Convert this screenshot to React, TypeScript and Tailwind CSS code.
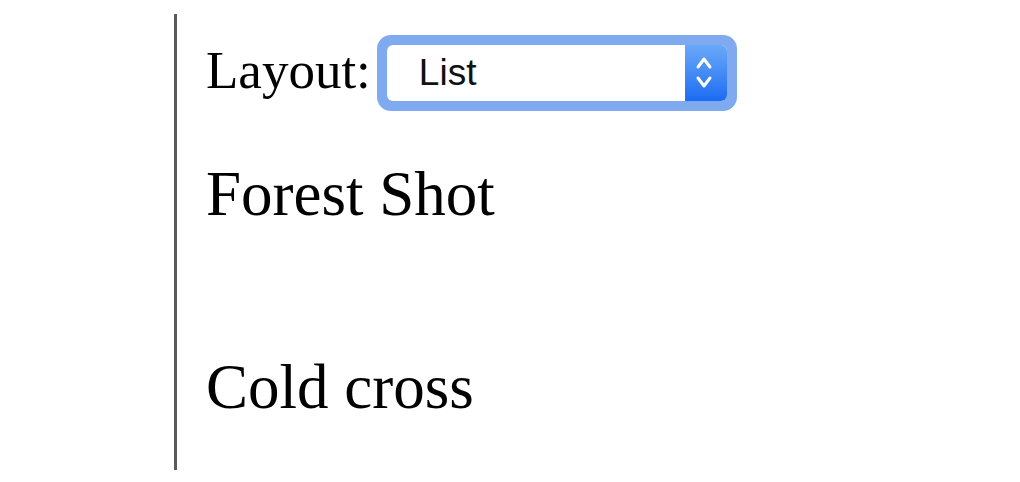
import React from "react";

export default function App() {
  return (
    <div className="h-[482px] w-[1020px] bg-white pl-[174px] pt-[14px] overflow-hidden" style={{ fontFamily: '"Liberation Serif", "Times New Roman", serif' }}>
      <div className="flex h-[456px] flex-col items-start border-l-[3px] border-[#5a5a5a] pl-[29px] text-black">
        <div className="mt-[21px] flex h-[76px] items-center">
          <span className="-mt-[6px] text-[53px] leading-none">Layout:</span>
          <div className="ml-[6px] rounded-[14px] bg-[#80aaf0] p-[10px]">
            <div className="flex h-[56px] w-[340px] overflow-hidden rounded-[6px] bg-white">
              <div className="flex flex-1 items-center pl-[32px] text-[37px] text-[#111]" style={{ fontFamily: '"Liberation Sans", Arial, sans-serif' }}>
                List
              </div>
              <div className="w-[42px] bg-gradient-to-b from-[#6aa8f8] to-[#1a6bf3]">
                <svg width="42" height="56" viewBox="0 0 42 56" fill="none" stroke="white" strokeWidth="3" strokeLinecap="round" strokeLinejoin="round">
                  <path d="M13 22 L19 14 L25 22" />
                  <path d="M13 33 L19 41 L25 33" />
                </svg>
              </div>
            </div>
          </div>
        </div>
        <div className="mt-[52px] text-[63px] leading-none">Forest Shot</div>
        <div className="mt-[130px] text-[63px] leading-none">Cold cross</div>
      </div>
    </div>
  );
}
